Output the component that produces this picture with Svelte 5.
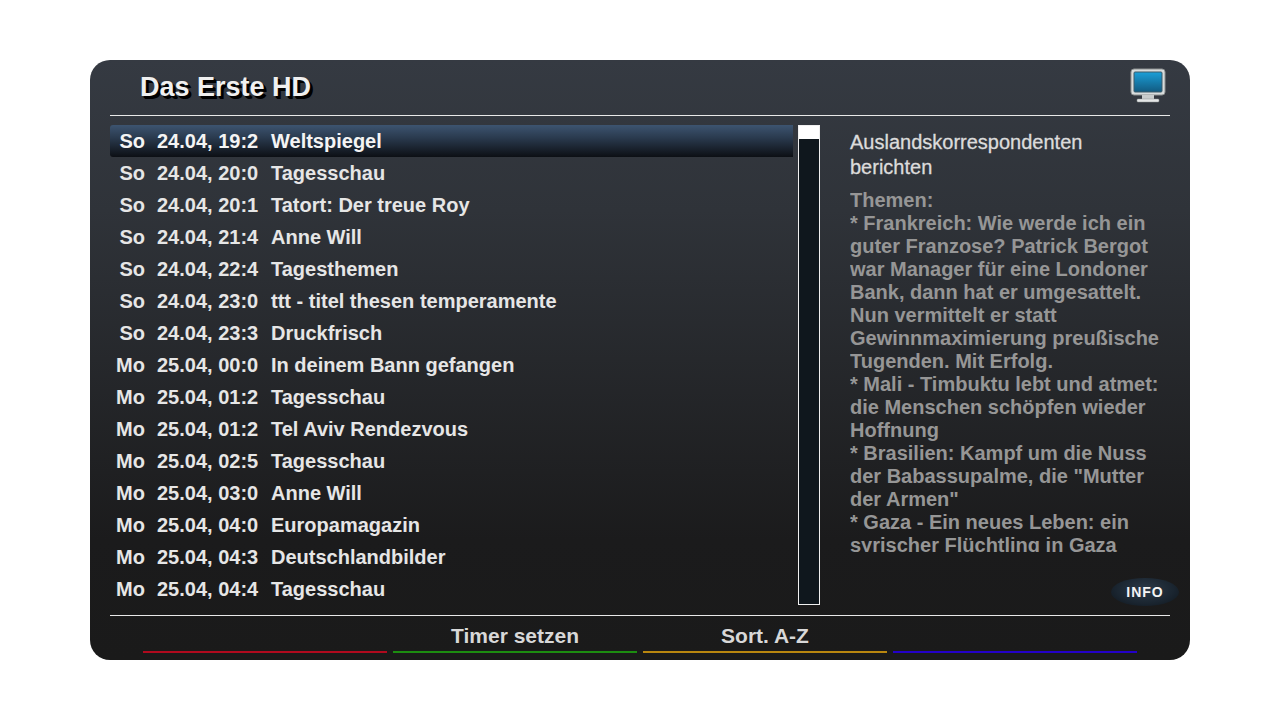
<script lang="ts">
    const rows = [
        ["So", "24.04, 19:2", "Weltspiegel"],
        ["So", "24.04, 20:0", "Tagesschau"],
        ["So", "24.04, 20:1", "Tatort: Der treue Roy"],
        ["So", "24.04, 21:4", "Anne Will"],
        ["So", "24.04, 22:4", "Tagesthemen"],
        ["So", "24.04, 23:0", "ttt - titel thesen temperamente"],
        ["So", "24.04, 23:3", "Druckfrisch"],
        ["Mo", "25.04, 00:0", "In deinem Bann gefangen"],
        ["Mo", "25.04, 01:2", "Tagesschau"],
        ["Mo", "25.04, 01:2", "Tel Aviv Rendezvous"],
        ["Mo", "25.04, 02:5", "Tagesschau"],
        ["Mo", "25.04, 03:0", "Anne Will"],
        ["Mo", "25.04, 04:0", "Europamagazin"],
        ["Mo", "25.04, 04:3", "Deutschlandbilder"],
        ["Mo", "25.04, 04:4", "Tagesschau"]
    ]
    const keys = [
        { label: "", color: "#b00a1e" },
        { label: "Timer setzen", color: "#1c8c10" },
        { label: "Sort. A-Z", color: "#b8860f" },
        { label: "", color: "#2300c8" }
    ]
    const lines = [
        "Themen:",
        "* Frankreich: Wie werde ich ein",
        "guter Franzose? Patrick Bergot",
        "war Manager für eine Londoner",
        "Bank, dann hat er umgesattelt.",
        "Nun vermittelt er statt",
        "Gewinnmaximierung preußische",
        "Tugenden. Mit Erfolg.",
        "* Mali - Timbuktu lebt und atmet:",
        "die Menschen schöpfen wieder",
        "Hoffnung",
        "* Brasilien: Kampf um die Nuss",
        "der Babassupalme, die \"Mutter",
        "der Armen\"",
        "* Gaza - Ein neues Leben: ein",
        "syrischer Flüchtling in Gaza",
        "Leben - Hoffnung auf Frieden"
    ]
</script>

<div class="panel">
    <header class="top">
        <h1>Das Erste HD</h1>
        <svg class="monitor" width="36" height="36" viewBox="0 0 36 36">
            <defs>
                <linearGradient id="scr" x1="0" y1="0" x2="0" y2="1">
                    <stop offset="0" stop-color="#1a9fd8"/>
                    <stop offset="1" stop-color="#125a80"/>
                </linearGradient>
            </defs>
            <rect x="1" y="1" width="34" height="26" rx="3" fill="#d8dcdc" stroke="#8c9090" stroke-width="1"/>
            <rect x="4" y="4" width="28" height="20" rx="1" fill="url(#scr)" stroke="#3c5a68" stroke-width="1"/>
            <rect x="12" y="27" width="12" height="5" fill="#c8cccc"/>
            <rect x="7" y="31" width="22" height="3" rx="1" fill="#e4e6e6" stroke="#909494" stroke-width="0.5"/>
        </svg>
    </header>
    <div class="main">
        <ul class="list">
            {#each rows as row, i}
                <li class:sel={i === 0}>
                    <span class="day">{row[0]}</span>
                    <span class="date">{row[1]}</span>
                    <span class="name">{row[2]}</span>
                </li>
            {/each}
        </ul>
        <div class="scroll"><div class="thumb"></div></div>
        <div class="side">
            <h2>Auslandskorrespondenten<br>berichten</h2>
            <div class="desc">
                {#each lines as line}
                    <div>{line}</div>
                {/each}
            </div>
        </div>
    </div>
    <footer class="keys">
        {#each keys as key}
            <div class="key">
                <span class="label">{key.label}</span>
                <span class="bar" style="background:{key.color}"></span>
            </div>
        {/each}
    </footer>
    <div class="info">INFO</div>
</div>

<style>
    :global(body){
        background: #fff;
        font-family: "Liberation Sans", Arial, sans-serif;
    }
    .panel{
        position: relative;
        box-sizing: border-box;
        width: 1100px;
        height: 600px;
        margin: 60px 0 0 90px;
        padding: 0 20px;
        border-radius: 20px;
        background: linear-gradient(#353a42 0%, #2f3339 25%, #1b1b1c 80%, #1a1a1a 100%);
        display: flex;
        flex-direction: column;
    }
    .top{
        box-sizing: border-box;
        height: 56px;
        border-bottom: 1px solid #e8e8e8;
        display: flex;
        align-items: center;
        justify-content: space-between;
        padding: 0 4px 0 30px;
    }
    h1{
        margin: 0;
        font-size: 27px;
        font-weight: bold;
        color: #f0f0f0;
        text-shadow: 2px 2px 0 #000, 3px 3px 0 #000;
    }
    .monitor{
        margin-bottom: 4px;
    }
    .main{
        display: flex;
        height: 480px;
        margin-top: 9px;
    }
    .list{
        list-style: none;
        margin: 0;
        padding: 0;
        width: 683px;
    }
    .list li{
        display: flex;
        height: 32px;
        line-height: 32px;
        font-size: 20px;
        font-weight: bold;
        color: #e6e6e6;
        white-space: nowrap;
    }
    .list li.sel{
        color: #f4f4f4;
        border-radius: 3px 0 0 3px;
        background: linear-gradient(#3d5470 0%, #2a3a4e 40%, #0c0f14 100%);
    }
    .day{
        width: 35px;
        text-align: right;
    }
    .date{
        margin-left: 12px;
        width: 114px;
    }
    .scroll{
        box-sizing: border-box;
        width: 22px;
        height: 480px;
        margin-left: 5px;
        border: 1px solid #f0f0f0;
        background: #0f171d;
    }
    .thumb{
        height: 13px;
        background: #fff;
    }
    .side{
        margin-left: 30px;
        width: 320px;
    }
    h2{
        margin: 5px 0 9px;
        font-size: 20px;
        line-height: 25px;
        font-weight: normal;
        color: #dcdcdc;
        -webkit-text-stroke: 0.3px #dcdcdc;
    }
    .desc{
        height: 363px;
        overflow: hidden;
        font-size: 20px;
        line-height: 23px;
        font-weight: bold;
        color: #969696;
        white-space: nowrap;
    }
    .keys{
        box-sizing: border-box;
        margin-top: 10px;
        border-top: 1px solid #e8e8e8;
        padding: 6px 33px 0;
        display: flex;
        gap: 6px;
    }
    .key{
        width: 244px;
        display: flex;
        flex-direction: column;
        align-items: center;
    }
    .label{
        height: 29px;
        line-height: 28px;
        font-size: 21px;
        font-weight: bold;
        color: #d8d8d8;
    }
    .bar{
        width: 100%;
        height: 2px;
    }
    .info{
        position: absolute;
        left: 1021px;
        top: 518px;
        width: 68px;
        height: 28px;
        border-radius: 50%;
        background: radial-gradient(ellipse at 50% 40%, #2c3a48 0%, #1a2530 60%, #0e141a 100%);
        color: #f4f4f4;
        font-size: 14px;
        font-weight: bold;
        letter-spacing: 1px;
        line-height: 28px;
        text-align: center;
    }
</style>
